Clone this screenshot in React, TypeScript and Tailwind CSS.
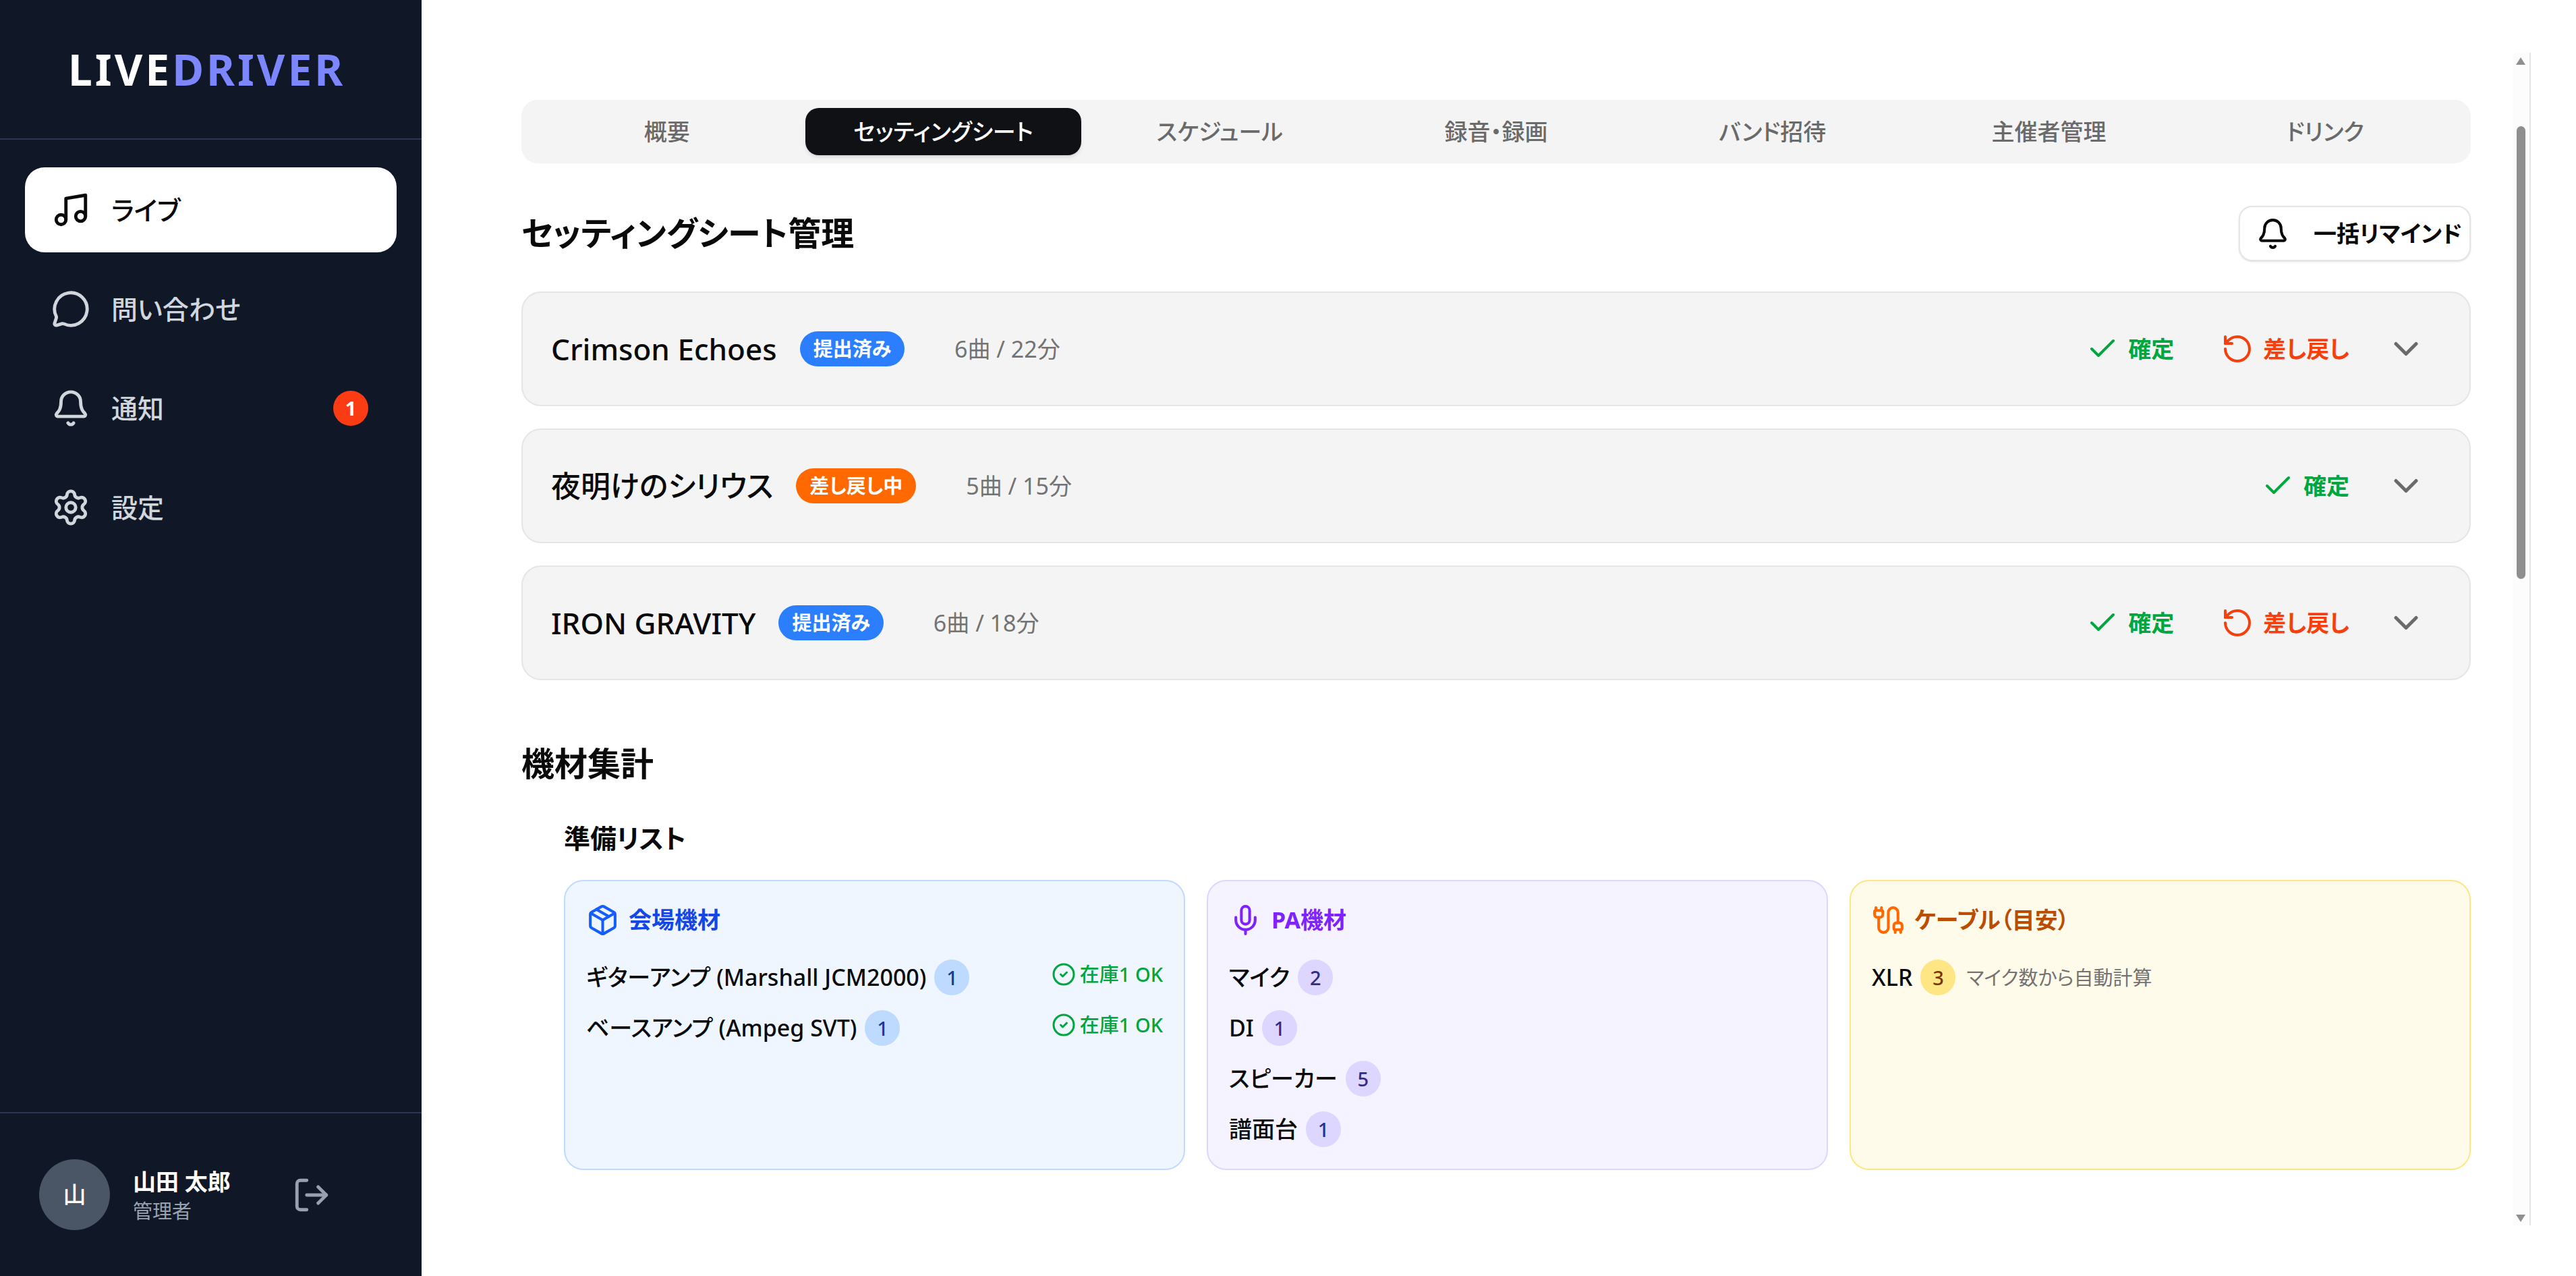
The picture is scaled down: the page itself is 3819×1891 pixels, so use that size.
import { Bell, Cable, Check, CheckCircle2, ChevronDown, LogOut, MessageCircle, Mic, Music, Package, RotateCcw, Settings } from "lucide-react";

const TABS = ["概要", "セッティングシート", "スケジュール", "録音・録画", "バンド招待", "主催者管理", "ドリンク"];

const NAV = [
  { label: "ライブ", icon: Music, active: true },
  { label: "問い合わせ", icon: MessageCircle },
  { label: "通知", icon: Bell, badge: 1 },
  { label: "設定", icon: Settings },
];

const BANDS = [
  { name: "Crimson Echoes", status: "提出済み", statusClass: "bg-[#2b7fff]", meta: "6曲 / 22分", canReturn: true },
  { name: "夜明けのシリウス", status: "差し戻し中", statusClass: "bg-[#ff6900]", meta: "5曲 / 15分", canReturn: false },
  { name: "IRON GRAVITY", status: "提出済み", statusClass: "bg-[#2b7fff]", meta: "6曲 / 18分", canReturn: true },
];

function CountBadge({ n, className }: { n: number; className: string }) {
  return (
    <span className={`flex h-[53px] w-[52px] shrink-0 items-center justify-center rounded-full text-[29px] font-medium ${className}`}>
      {n}
    </span>
  );
}

function Sidebar() {
  return (
    <aside className="flex h-[1891px] w-[625px] shrink-0 flex-col bg-[#101828]">
      <div className="flex h-[207px] items-center border-b-2 border-[#2d3550] pl-[101px] text-[64px] font-bold tracking-[4px]">
        <span className="text-white">LIVE</span>
        <span className="text-[#7c86ff]">DRIVER</span>
      </div>
      <nav className="flex flex-1 flex-col gap-[21px] px-[37px] pt-[41px]">
        {NAV.map((item) => (
          <div
            key={item.label}
            className={`flex h-[126px] items-center gap-[31px] rounded-[29px] pl-[39px] pr-[42px] text-[39px] font-medium ${
              item.active ? "bg-white text-[#0a0a0a]" : "text-[#d1d5dc]"
            }`}
          >
            <item.icon size={58} />
            <span className="flex-1">{item.label}</span>
            {item.badge && (
              <span className="flex h-[52px] w-[52px] items-center justify-center rounded-full bg-[#fb3b14] text-[29px] font-bold text-white">
                {item.badge}
              </span>
            )}
          </div>
        ))}
      </nav>
      <div className="flex h-[243px] items-center border-t-2 border-[#2d3550] pl-[58px]">
        <div className="flex h-[105px] w-[105px] items-center justify-center rounded-full bg-[#4a5565] text-[34px] font-medium text-white">
          山
        </div>
        <div className="ml-[34px] flex w-[260px] flex-col">
          <span className="text-[34px] leading-[48px] font-bold text-white">山田 太郎</span>
          <span className="text-[29px] leading-[40px] text-[#99a1af]">管理者</span>
        </div>
        <LogOut size={58} className="-ml-[24px] text-[#99a1af]" />
      </div>
    </aside>
  );
}

function BandRow({ band }: { band: (typeof BANDS)[number] }) {
  return (
    <div className="flex h-[170px] items-center rounded-[29px] border-2 border-[#e5e5e5] bg-[#f4f4f5] pl-[42px] pr-[64px]">
      <span className="text-[44px] font-medium text-[#0a0a0a]">{band.name}</span>
      <span className={`ml-[34px] flex h-[52px] items-center rounded-full px-[20px] text-[29px] font-bold text-white ${band.statusClass}`}>
        {band.status}
      </span>
      <span className="ml-[74px] text-[34px] text-[#737373]">{band.meta}</span>
      <div className="ml-auto flex items-center text-[34px] font-bold">
        <span className="flex items-center gap-[14px] text-[#00a63e]">
          <Check size={48} />
          確定
        </span>
        {band.canReturn && (
          <span className="ml-[70px] flex items-center gap-[14px] text-[#f5400e]">
            <RotateCcw size={48} />
            差し戻し
          </span>
        )}
        <ChevronDown size={60} className="ml-[54px] text-[#6a6a6a]" />
      </div>
    </div>
  );
}

function StockOk() {
  return (
    <span className="flex items-center gap-[6px] pt-[2px] text-[29px] leading-[40px] font-medium text-[#00a63e]">
      <CheckCircle2 size={36} />
      在庫1 OK
    </span>
  );
}

function EquipmentCards() {
  const item = "text-[34px] font-medium text-[#0a0a0a]";
  const row = "flex h-[53px] items-center gap-[12px]";
  return (
    <div className="grid grid-cols-3 gap-[32px]">
      <div className="h-[430px] rounded-[29px] border-2 border-[#bedbff] bg-[#eff6ff] px-[31px] pt-[33px]">
        <div className="mb-[34px] flex h-[49px] items-center gap-[14px] text-[34px] font-bold text-[#1447e6]">
          <Package size={49} className="text-[#155dfc]" />
          会場機材
        </div>
        <div className="flex flex-col gap-[22px]">
          <div className="flex items-start justify-between">
            <div className={row}>
              <span className={item}>ギターアンプ (Marshall JCM2000)</span>
              <CountBadge n={1} className="bg-[#bedbff] text-[#1c398e]" />
            </div>
            <StockOk />
          </div>
          <div className="flex items-start justify-between">
            <div className={row}>
              <span className={item}>ベースアンプ (Ampeg SVT)</span>
              <CountBadge n={1} className="bg-[#bedbff] text-[#1c398e]" />
            </div>
            <StockOk />
          </div>
        </div>
      </div>
      <div className="h-[430px] rounded-[29px] border-2 border-[#ddd6ff] bg-[#f5f3ff] px-[31px] pt-[33px]">
        <div className="mb-[34px] flex h-[49px] items-center gap-[14px] text-[34px] font-bold text-[#7f22fe]">
          <Mic size={49} />
          PA機材
        </div>
        <div className="flex flex-col gap-[22px]">
          {[
            ["マイク", 2],
            ["DI", 1],
            ["スピーカー", 5],
            ["譜面台", 1],
          ].map(([label, n]) => (
            <div key={label} className={row}>
              <span className={item}>{label}</span>
              <CountBadge n={n as number} className="bg-[#ddd6ff] text-[#312c85]" />
            </div>
          ))}
        </div>
      </div>
      <div className="h-[430px] rounded-[29px] border-2 border-[#fee685] bg-[#fffbeb] px-[31px] pt-[33px]">
        <div className="mb-[34px] flex h-[49px] items-center gap-[14px] text-[34px] font-bold text-[#bb4d00]">
          <Cable size={49} className="text-[#ff6900]" />
          ケーブル（目安）
        </div>
        <div className={row}>
          <span className={item}>XLR</span>
          <CountBadge n={3} className="bg-[#fee685] text-[#7b3306]" />
          <span className="ml-[4px] text-[29px] text-[#737373]">マイク数から自動計算</span>
        </div>
      </div>
    </div>
  );
}

function Scrollbar() {
  return (
    <div className="mt-[78px] flex h-[1738px] w-[26px] shrink-0 flex-col items-center border-r-2 border-[#e5e5e5] bg-[#fcfcfc] pr-[2px]">
      <svg width="14" height="11" viewBox="0 0 14 11" className="mt-[7px]">
        <polygon points="7,0 14,11 0,11" fill="#8f8f8f" />
      </svg>
      <div className="mt-[91px] h-[671px] w-[13px] rounded-full bg-[#8f8f8f]" />
      <div className="flex-1" />
      <svg width="14" height="11" viewBox="0 0 14 11" className="mb-[5px]">
        <polygon points="0,0 14,0 7,11" fill="#8f8f8f" />
      </svg>
    </div>
  );
}

export default function App() {
  return (
    <div className="flex h-[1891px] w-[3819px] overflow-hidden bg-white font-['Noto_Sans','Noto_Sans_CJK_JP',sans-serif] [font-feature-settings:'palt']">
      <Sidebar />
      <main className="min-w-0 flex-1 pl-[148px] pr-[63px] pt-[148px]">
        <div className="grid h-[94px] grid-cols-7 items-center rounded-[24px] bg-[#f4f4f5] px-[11px]">
          {TABS.map((tab) => (
            <div
              key={tab}
              className={`flex h-[70px] items-center justify-center rounded-[20px] text-[34px] font-medium ${
                tab === "セッティングシート" ? "bg-[#0f1115] text-white shadow-md" : "text-[#6a6a6a]"
              }`}
            >
              {tab}
            </div>
          ))}
        </div>

        <div className="mt-[63px] flex h-[82px] items-center justify-between">
          <h2 className="text-[49px] font-bold text-[#0a0a0a]">セッティングシート管理</h2>
          <button className="flex h-[82px] w-[344px] items-center rounded-[20px] border-2 border-[#e5e5e5] bg-white pl-[24px] text-[34px] font-bold text-[#0a0a0a] shadow-sm">
            <Bell size={49} />
            <span className="ml-[36px]">一括リマインド</span>
          </button>
        </div>

        <div className="mt-[45px] flex flex-col gap-[33px]">
          {BANDS.map((band) => (
            <BandRow key={band.name} band={band} />
          ))}
        </div>

        <h2 className="mt-[89px] text-[49px] leading-[68px] font-bold text-[#0a0a0a]">機材集計</h2>
        <div className="pl-[63px]">
          <h3 className="mt-[47px] mb-[32px] text-[39px] leading-[60px] font-bold text-[#0a0a0a]">準備リスト</h3>
          <EquipmentCards />
        </div>
      </main>
      <Scrollbar />
      <div className="w-[67px] shrink-0" />
    </div>
  );
}
